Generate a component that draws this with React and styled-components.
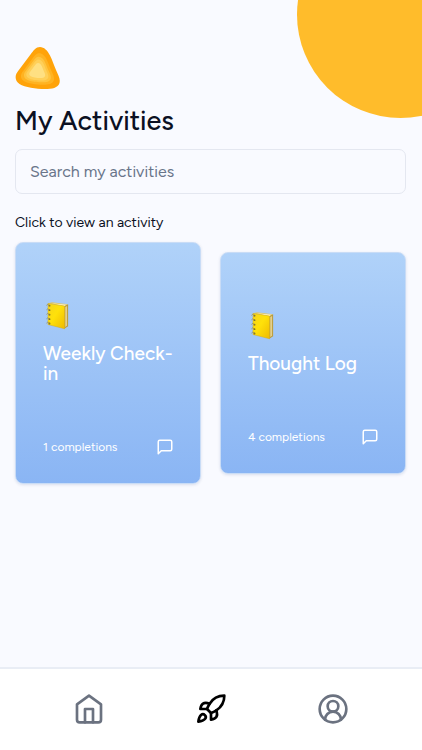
import React from "react";
import styled, { createGlobalStyle } from "styled-components";

const GlobalStyle = createGlobalStyle`
  *, *::before, *::after { box-sizing: border-box; }
  body {
    margin: 0;
    background: #f9faff;
    color: #0b1023;
    font-family: Figtree, Lato, sans-serif;
  }
`;

const Page = styled.div`
  position: relative;
  display: flex;
  flex-direction: column;
  min-height: 100vh;
  overflow: hidden;
`;

const Sun = styled.div`
  position: absolute;
  top: -89px;
  right: -82px;
  width: 207px;
  height: 207px;
  border-radius: 50%;
  background: #ffbc2b;
`;

const Main = styled.main`
  position: relative;
  flex: 1;
  padding: 46px 16px 24px 15px;
`;

const Logo = styled.svg`
  display: block;
  width: 46px;
  height: 44px;
`;

const Heading = styled.h1`
  margin: 13px 0 10px;
  font-size: 27px;
  line-height: 36px;
  font-weight: 500;
`;

const Search = styled.input`
  display: block;
  width: 100%;
  height: 45px;
  padding: 0 14px;
  border: 1px solid #e4e7f0;
  border-radius: 7px;
  background: transparent;
  color: inherit;
  font: inherit;
  font-size: 16px;
  &::placeholder { color: #69758a; opacity: 1; }
`;

const Hint = styled.p`
  margin: 19px 0 9px;
  font-size: 14px;
  line-height: 20px;
`;

const Cards = styled.div`
  display: grid;
  grid-template-columns: 1fr 1fr;
  align-items: center;
  gap: 19px;
`;

const Card = styled.button`
  display: block;
  width: 100%;
  padding: 57px 26px 26px 27px;
  border: 1px solid #c9dcf6;
  border-radius: 8px;
  background: linear-gradient(#b0d2f9, #8ab5f4);
  box-shadow: 0 1px 3px rgba(30, 60, 120, 0.14);
  color: #fff;
  font: inherit;
  text-align: left;
  cursor: pointer;
`;

const Notebook = styled.svg`
  display: block;
  width: 28px;
  height: 30px;
`;

const CardTitle = styled.h2`
  margin: 14px 0 53px;
  font-size: 19px;
  line-height: 20px;
  font-weight: 500;
`;

const CardFooter = styled.div`
  display: flex;
  align-items: center;
  justify-content: space-between;
  font-size: 12px;
  line-height: 20px;
`;

const LineIcon = styled.svg`
  display: block;
  width: ${(p) => p.$size}px;
  height: ${(p) => p.$size}px;
  fill: none;
  stroke: currentColor;
  stroke-width: 2;
  stroke-linecap: round;
  stroke-linejoin: round;
`;

const Nav = styled.nav`
  position: relative;
  display: grid;
  grid-template-columns: repeat(3, 1fr);
  padding: 24px 28px 25px;
  border-top: 2px solid #e9edf5;
  background: #fff;
`;

const NavLink = styled.a`
  display: flex;
  justify-content: center;
  color: ${(p) => (p.$active ? "#000" : "#6b7280")};
`;

function NotebookIcon() {
  return (
    <Notebook viewBox="0 0 28 30" aria-hidden="true">
      <defs>
        <linearGradient id="cover" x1="0" y1="0" x2="1" y2="1">
          <stop offset="0" stopColor="#f5d51b" />
          <stop offset="0.45" stopColor="#ffe10a" />
          <stop offset="1" stopColor="#efba00" />
        </linearGradient>
      </defs>
      <path d="M5 3.2 9 2.3 25 4.2 21.5 6.4Z" fill="#dcc66d" />
      <path d="M8 3.3 23.8 4.8 21.4 6Z" fill="#fff6cf" />
      <path d="m21.2 6.2 3.9-2v22L21.2 28.8Z" fill="#b99a38" />
      <path d="m22.2 7 1.9-1.1v19.8l-1.9 1.4Z" fill="#e3cf8c" />
      <path d="M5 3.4 21.6 6v22.8L5 24.5Z" fill="url(#cover)" stroke="#d5ac17" strokeWidth="0.5" />
      {[5, 9.5, 14, 18.5, 22.8].map((y) => (
        <g key={y}>
          <circle cx="6.5" cy={y + 0.7} r="0.9" fill="#6f6328" />
          <path d={`M6.4 ${y + 0.5}Q4.4 ${y - 1.6} 3.5 ${y + 0.3}`} fill="none" stroke="#a0975e" strokeWidth="1" />
        </g>
      ))}
    </Notebook>
  );
}

const blob =
  "M25 1C29 1 32.5 4.5 35 9.5C37.5 14.5 38.5 18.5 41 24C43.5 29.5 45.5 33 44.5 37C43 42 37 43 30 43C21 43 10 41.5 4.5 38C-0.5 34.5 -0.5 29 3.5 24.5L15.5 8.5C18.5 4.5 21 1 25 1Z";

const rings = [
  ["#ffa30a", 1],
  ["#ffb322", 0.75],
  ["#ffc440", 0.61],
  ["#ffd05a", 0.5],
  ["#ffe082", 0.36],
];

function ActivityCard({ title, count }) {
  return (
    <Card type="button">
      <NotebookIcon />
      <CardTitle>{title}</CardTitle>
      <CardFooter>
        <span>{count} completions</span>
        <LineIcon $size={18} viewBox="0 0 24 24" aria-hidden="true">
          <path d="M21 15a2 2 0 0 1-2 2H7l-4 4V5a2 2 0 0 1 2-2h14a2 2 0 0 1 2 2z" />
        </LineIcon>
      </CardFooter>
    </Card>
  );
}

export default function App() {
  return (
    <Page>
      <GlobalStyle />
      <Sun />
      <Main>
        <Logo viewBox="0 0 46 44" aria-hidden="true">
          {rings.map(([color, scale]) => (
            <path
              key={color}
              d={blob}
              fill={color}
              transform={`translate(22 26) scale(${scale}) translate(-22 -26)`}
            />
          ))}
        </Logo>
        <Heading>My Activities</Heading>
        <Search type="search" aria-label="Search my activities" placeholder="Search my activities" />
        <Hint>Click to view an activity</Hint>
        <Cards>
          <ActivityCard title="Weekly Check-in" count={1} />
          <ActivityCard title="Thought Log" count={4} />
        </Cards>
      </Main>
      <Nav aria-label="Main">
        <NavLink href="#home" aria-label="Home">
          <LineIcon $size={32} viewBox="0 0 24 24">
            <path d="M3 8.5 12 2l9 6.5V20a2 2 0 0 1-2 2H5a2 2 0 0 1-2-2z" />
            <path d="M9 22V12h6v10" />
          </LineIcon>
        </NavLink>
        <NavLink href="#activities" aria-label="Activities" aria-current="page" $active>
          <LineIcon $size={32} viewBox="0 0 24 24">
            <path d="M4.5 16.5c-1.5 1.26-2 5-2 5s3.74-.5 5-2c.71-.84.7-2.13-.09-2.91a2.18 2.18 0 0 0-2.91-.09z" />
            <path d="m12 15-3-3a22 22 0 0 1 2-3.95A12.88 12.88 0 0 1 22 2c0 2.72-.78 7.5-6 11a22.35 22.35 0 0 1-4 2z" />
            <path d="M9 12H4s.55-3.03 2-4c1.62-1.08 5 0 5 0" />
            <path d="M12 15v5s3.03-.55 4-2c1.08-1.62 0-5 0-5" />
          </LineIcon>
        </NavLink>
        <NavLink href="#profile" aria-label="Profile">
          <LineIcon $size={32} viewBox="0 0 24 24">
            <circle cx="12" cy="12" r="10" />
            <circle cx="12" cy="10" r="4" />
            <path d="M18 20a6 6 0 0 0-12 0" />
          </LineIcon>
        </NavLink>
      </Nav>
    </Page>
  );
}
